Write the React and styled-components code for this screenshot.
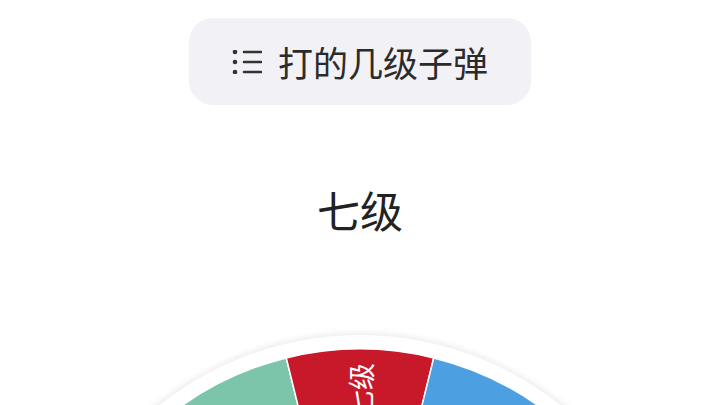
import React from 'react'
import styled, { createGlobalStyle } from 'styled-components'

const GlobalStyle = createGlobalStyle`
    html, body {
        margin: 0;
        padding: 0;
        height: 100%;
        overflow: hidden;
        background: #fff;
    }
    body {
        font-family: "Noto Sans CJK SC", "Noto Sans", sans-serif;
    }
`

const Page = styled.div`
    width: 720px;
    height: 405px;
    overflow: hidden;
    display: flex;
    flex-direction: column;
    align-items: center;

    > * {
        flex-shrink: 0;
    }
`

const TitlePill = styled.div`
    margin-top: 18px;
    width: 342px;
    height: 87px;
    box-sizing: border-box;
    border-radius: 24px;
    background: #f2f1f6;
    display: flex;
    align-items: center;
    justify-content: center;
    gap: 16px;
    color: #2b2b2b;
    font-size: 35px;
    line-height: 1;
`

const Result = styled.div`
    margin-top: 74px;
    font-size: 43px;
    line-height: 60px;
    color: #222;
`

const Wheel = styled.div`
    margin-top: 96px;
    width: 644px;
    height: 644px;
    box-sizing: border-box;
    padding: 14px;
    border-radius: 50%;
    background: #fff;
    box-shadow: 0 0 8px rgba(0, 0, 0, 0.12);
`

const ListIcon = () => (
    <svg width="30" height="24" viewBox="0 0 30 24">
        <g fill="#333">
            <circle cx="3" cy="2" r="2.3" />
            <circle cx="3" cy="12" r="2.3" />
            <circle cx="3" cy="22" r="2.3" />
        </g>
        <g stroke="#333" strokeWidth="2.6" strokeLinecap="round">
            <line x1="12" y1="2" x2="29" y2="2" />
            <line x1="12" y1="12" x2="29" y2="12" />
            <line x1="12" y1="22" x2="29" y2="22" />
        </g>
    </svg>
)

const segments = [
    { label: '一级', color: '#f0a94a' },
    { label: '二级', color: '#9b7fd1' },
    { label: '三级', color: '#e8738a' },
    { label: '四级', color: '#f2c94c' },
    { label: '五级', color: '#5ab0a0' },
    { label: '六级', color: '#7cc5ab' },
    { label: '七级', color: '#c8192a' },
    { label: '八级', color: '#4c9fe0' },
    { label: '九级', color: '#f08a4b' },
    { label: '十级', color: '#8bc34a' },
    { label: '十一级', color: '#5c6bc0' },
    { label: '十二级', color: '#e57373' },
    { label: '十三级', color: '#4db6ac' },
]
const ACTIVE = 6

const WheelChart = () => {
    const size = 616
    const c = size / 2
    const r = size / 2
    const step = 360 / segments.length
    const pt = deg => {
        const a = deg * Math.PI / 180
        return [c + r * Math.sin(a), c - r * Math.cos(a)]
    }

    return (
        <svg width={size} height={size} viewBox={`0 0 ${size} ${size}`}>
            {segments.map((seg, i) => {
                const mid = (i - ACTIVE) * step
                const [x1, y1] = pt(mid - step / 2)
                const [x2, y2] = pt(mid + step / 2)
                return (
                    <path
                        key={seg.label}
                        d={`M${c} ${c} L${x1} ${y1} A${r} ${r} 0 0 1 ${x2} ${y2} Z`}
                        fill={seg.color}
                        stroke="#fff"
                        strokeWidth="1.5"
                    />
                )
            })}
            {/* only the picked segment carries its label on the visible part */}
            <text
                transform={`translate(${c} 14) rotate(-90)`}
                textAnchor="end"
                dominantBaseline="central"
                fill="#fff"
                fontSize="27"
                fontFamily={'"Noto Sans CJK SC", sans-serif'}
            >
                {segments[ACTIVE].label}
            </text>
        </svg>
    )
}

const App = () => (
    <Page>
        <GlobalStyle />
        <TitlePill>
            <ListIcon />
            <span>打的几级子弹</span>
        </TitlePill>
        <Result>七级</Result>
        <Wheel>
            <WheelChart />
        </Wheel>
    </Page>
)

export default App
